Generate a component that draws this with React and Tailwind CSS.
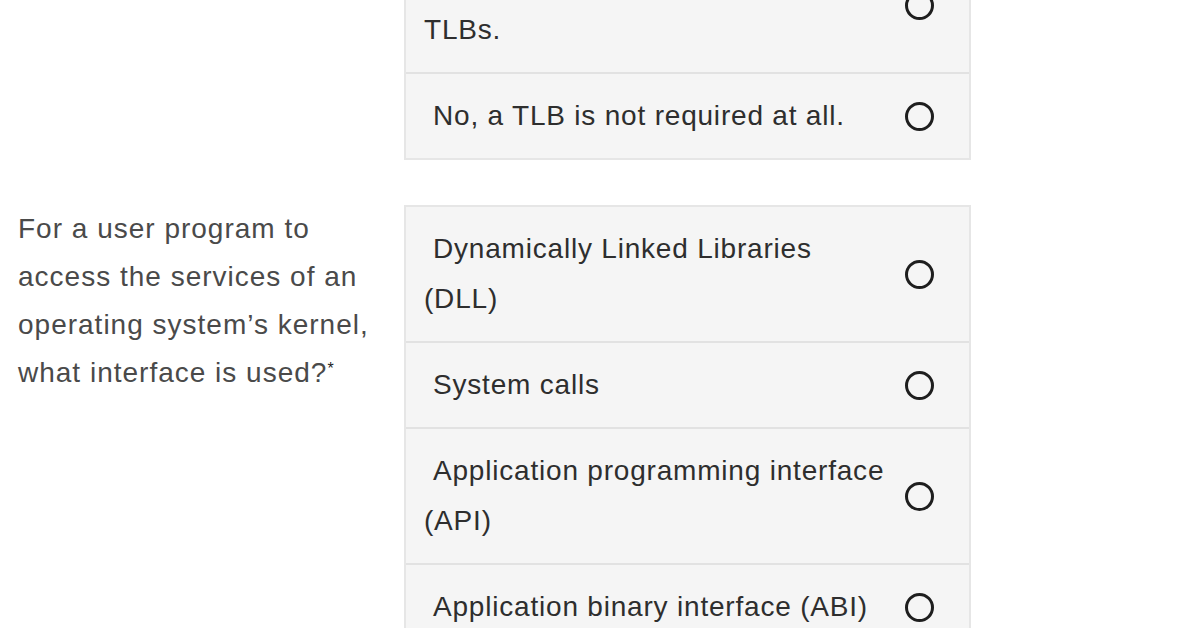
import React from 'react';

const Radio = () => (
  <span className="block w-[29px] h-[29px] shrink-0 rounded-full border-[3px] border-[#1e1e1e]" />
);

const Option = ({ children, last }) => (
  <label
    className={`flex items-center justify-between pl-[18px] pr-[35px] py-[17px] bg-[#f5f5f5] ${
      last ? '' : 'border-b-2 border-[#e2e2e2]'
    }`}
  >
    <span className="block w-[470px] indent-[9px] text-[28px] tracking-[0.8px] leading-[50px] text-[#2e2e2e]">
      {children}
    </span>
    <Radio />
  </label>
);

const Question = ({ text, options, className = '' }) => (
  <div className={`flex ${className}`}>
    <div className="w-[404px] shrink-0 pl-[18px] pr-[16px] text-[28px] tracking-[1px] leading-[48px] text-[#4a4a4a]">
      {text}
    </div>
    <div className="w-[567px] shrink-0 border-2 border-[#e6e6e6] bg-[#f5f5f5]">
      {options.map((opt, i) => (
        <Option key={i} last={i === options.length - 1}>
          {opt}
        </Option>
      ))}
    </div>
  </div>
);

const App = () => {
  return (
    <div className="w-[1196px] h-[628px] overflow-hidden bg-white font-['Liberation_Sans',Arial,sans-serif]">
      <div className="mt-[-64px]">
        <Question
          text={null}
          options={[
            <>
              Yes, multiple processes need their
              <br />
              TLBs.
            </>,
            'No, a TLB is not required at all.',
          ]}
        />
        <Question
          className="mt-[45px]"
          text={
            <>
              For a user program to access the services of an operating system’s kernel,
              what interface is used?
              <span className="relative top-[-8px] text-[16px] leading-none text-[#222]">*</span>
            </>
          }
          options={[
            'Dynamically Linked Libraries (DLL)',
            'System calls',
            'Application programming interface (API)',
            'Application binary interface (ABI)',
          ]}
        />
      </div>
    </div>
  );
};

export default App;
